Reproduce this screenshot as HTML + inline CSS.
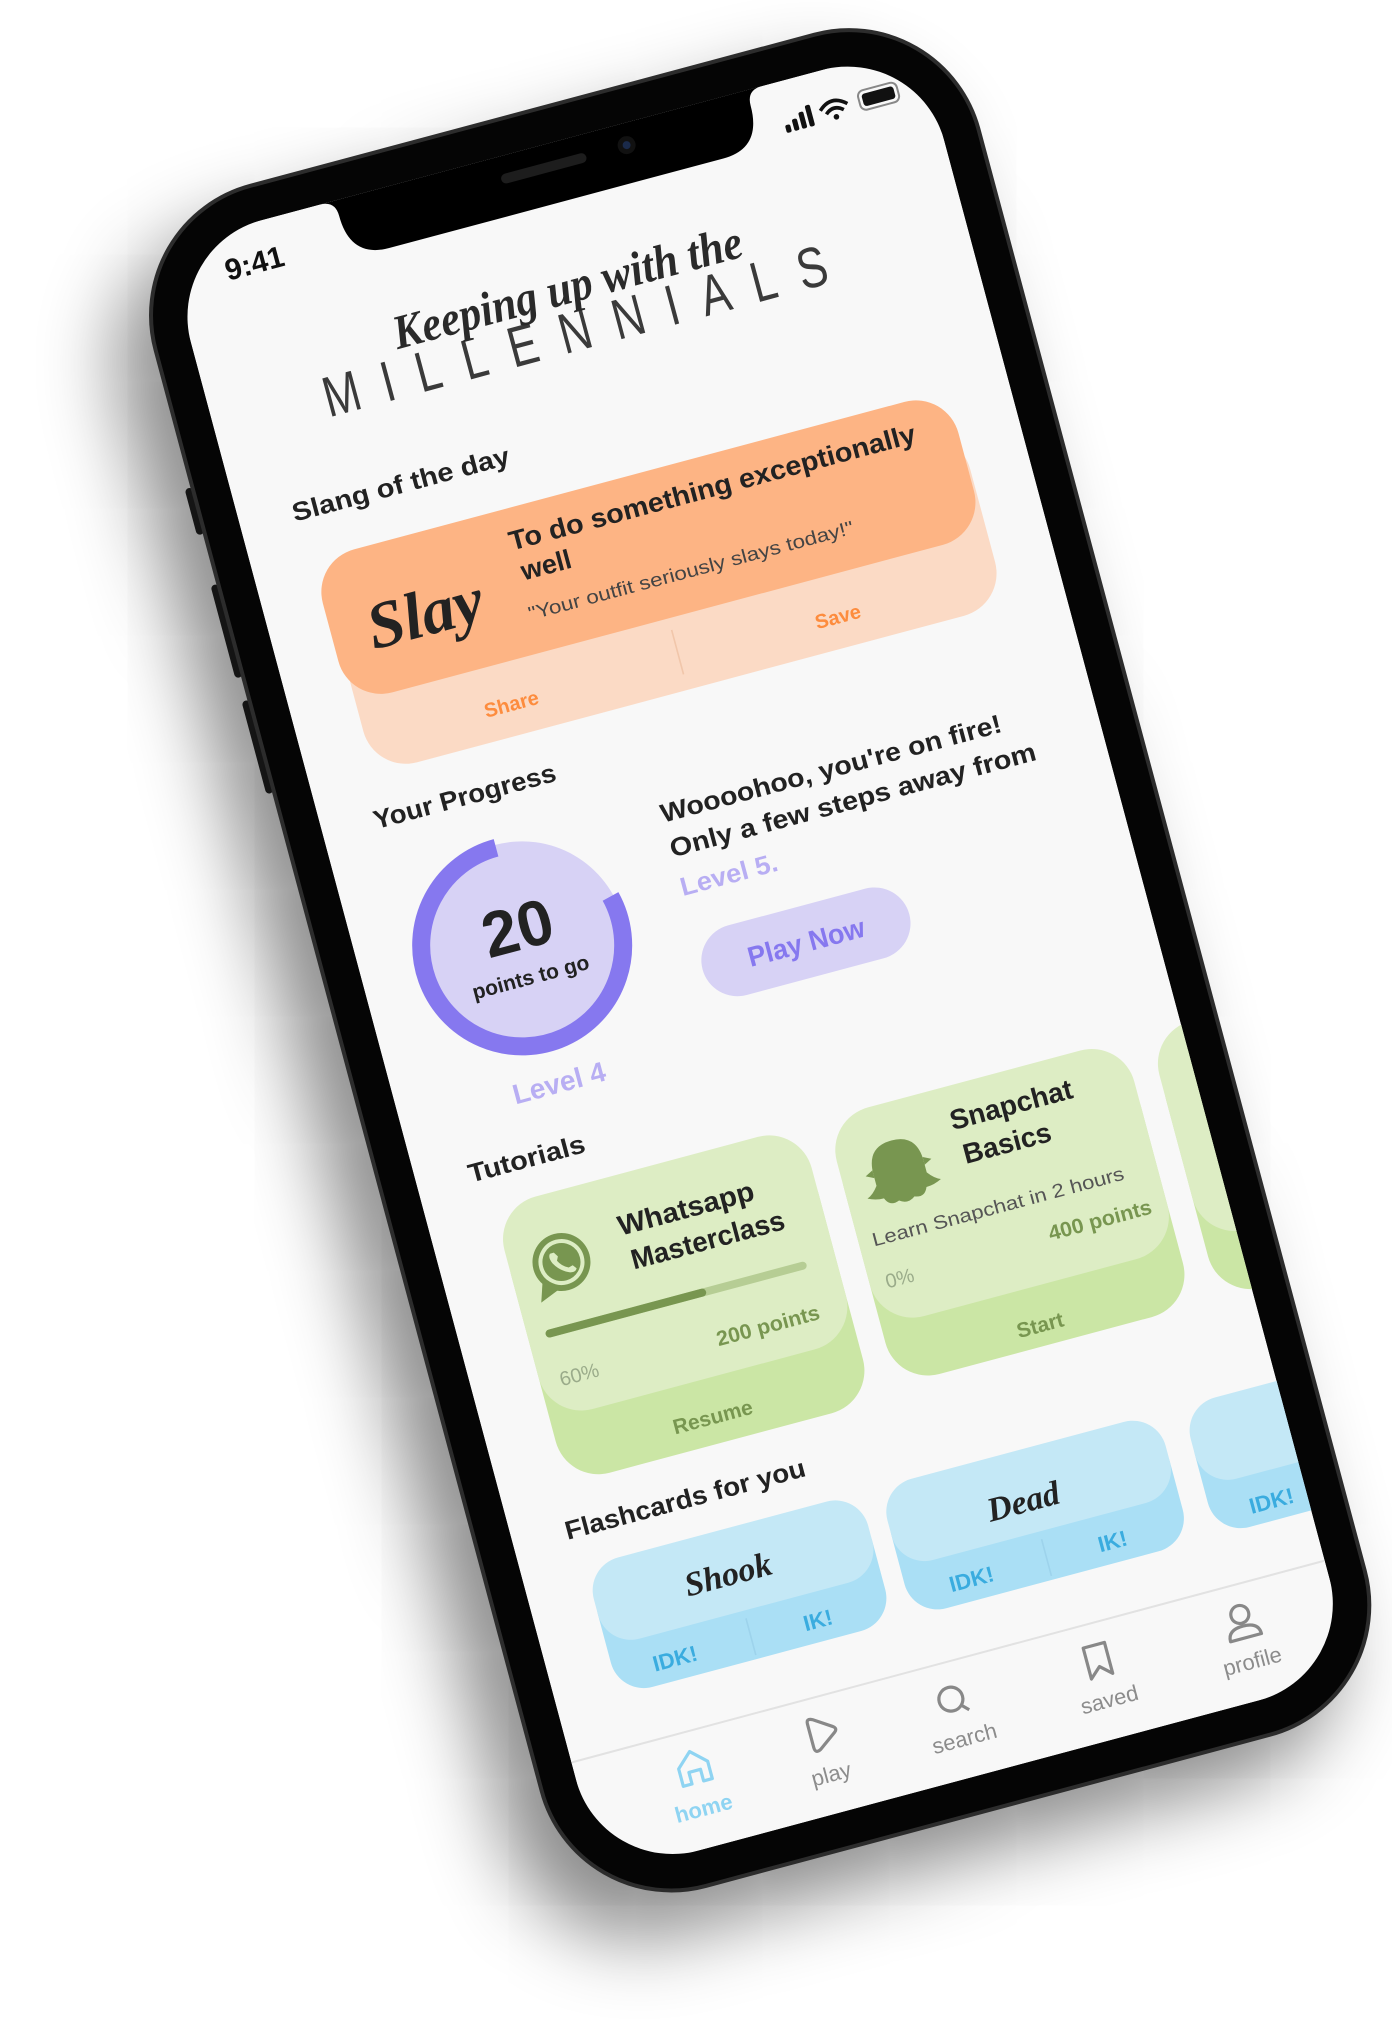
<!DOCTYPE html>
<html><head><meta charset="utf-8"><style>
html,body{margin:0;padding:0;background:#fff;width:1392px;height:2036px;overflow:hidden}
#ph{position:absolute;left:0;top:0;width:390px;height:844px;transform-origin:0 0;transform:translate(165px,246px) rotate(-15deg) scale(2)}
#frame{position:absolute;left:-19px;top:-19px;width:428px;height:882px;border-radius:68px;background:#050505;box-sizing:border-box;border:2.5px solid #2c2c2c;box-shadow:-22px 18px 38px rgba(0,0,0,.45)}
.btn{position:absolute;left:-22px;width:4px;background:#222;border-radius:2px}
svg{position:absolute;left:0;top:0}
text{font-family:"Liberation Sans",sans-serif}
.b{font-weight:bold}
.s{font-family:"Liberation Serif",serif;font-style:italic;font-weight:bold}
</style></head><body>
<div id="ph">
<div class="btn" style="top:120px;height:24px"></div>
<div class="btn" style="top:170px;height:48px"></div>
<div class="btn" style="top:230px;height:48px"></div>
<div id="frame"></div>
<svg width="390" height="844" viewBox="0 0 390 844">
<defs><clipPath id="c"><rect x="0" y="0" width="390" height="844" rx="50"/></clipPath></defs>
<g clip-path="url(#c)">
<rect width="390" height="844" fill="#f8f8f8"/>
<!-- notch -->
<path d="M80 0 Q88 0 88 8 Q88 30 108 30 L281 30 Q301 30 301 8 Q301 0 309 0 Z" fill="#000"/>
<rect x="171" y="9" width="44" height="5" rx="2.5" fill="#1d1d1d"/>
<circle cx="236" cy="11" r="4.5" fill="#111"/><circle cx="236" cy="11" r="2" fill="#1a2a4a"/>
<!-- status -->
<text x="26" y="25" font-size="15" class="b" fill="#111">9:41</text>
<g fill="#111"><rect x="315" y="22" width="2.6" height="4" rx="1"/><rect x="319" y="20" width="2.6" height="6" rx="1"/><rect x="323" y="17.5" width="2.6" height="8.5" rx="1"/><rect x="327" y="15" width="2.6" height="11" rx="1"/></g>
<path d="M334 19.5 Q341 13 348 19.5 M336.5 22 Q341 18 345.5 22" stroke="#111" stroke-width="1.8" fill="none"/><circle cx="341" cy="24.5" r="1.4" fill="#111"/>
<rect x="354" y="15" width="20" height="10" rx="3" fill="none" stroke="#888" stroke-width="1"/><rect x="355.8" y="16.8" width="16.4" height="6.4" rx="1.6" fill="#111"/>
<!-- title -->
<text x="57" y="0" font-size="22" fill="#3a3a3a" textLength="260" lengthAdjust="spacing" transform="translate(0,104) scale(1,1.3)">MILLENNIALS</text>
<text x="99" y="80" font-size="24" class="s" fill="#2a2a2a" textLength="180" lengthAdjust="spacingAndGlyphs">Keeping up with the</text>
<!-- slang -->
<text x="27" y="150" font-size="13" class="b" fill="#222" textLength="112" lengthAdjust="spacingAndGlyphs">Slang of the day</text>
<rect x="33" y="190" width="327" height="92" rx="22" fill="#fbdac5"/>
<rect x="30" y="171" width="329" height="74" rx="22" fill="#fdb484"/>
<text x="78" y="222" font-size="33" class="s" fill="#222" text-anchor="middle">Slay</text>
<text x="128" y="192" font-size="13.5" class="b" fill="#222" textLength="210" lengthAdjust="spacingAndGlyphs">To do something exceptionally</text>
<text x="130" y="208" font-size="13.5" class="b" fill="#222">well</text>
<text x="128" y="228" font-size="9.5" fill="#444" textLength="168" lengthAdjust="spacingAndGlyphs">"Your outfit seriously slays today!"</text>
<line x1="195" y1="251" x2="195" y2="274" stroke="#f1c6aa" stroke-width="0.8"/>
<text x="108" y="269.5" font-size="10" class="b" fill="#fd8c3e" text-anchor="middle">Share</text>
<text x="277" y="269.5" font-size="10" class="b" fill="#fd8c3e" text-anchor="middle">Save</text>
<!-- progress -->
<text x="26.5" y="309" font-size="13" class="b" fill="#222" textLength="94" lengthAdjust="spacingAndGlyphs">Your Progress</text>
<circle cx="82" cy="384" r="52" fill="#d7d2f5"/>
<path d="M131 371.8 A50.5 50.5 0 1 1 82 333.5" stroke="#8678ef" stroke-width="9" fill="none"/>
<text x="82" y="386" font-size="32" class="b" fill="#222" text-anchor="middle">20</text>
<text x="82" y="404" font-size="10.5" class="b" fill="#222" text-anchor="middle">points to go</text>
<text x="82" y="460" font-size="14" class="b" fill="#b8aef3" text-anchor="middle">Level 4</text>
<text x="166" y="343" font-size="13" class="b" fill="#222" textLength="176" lengthAdjust="spacingAndGlyphs">Woooohoo, you're on fire!</text>
<text x="166" y="361" font-size="13" class="b" fill="#222" textLength="189" lengthAdjust="spacingAndGlyphs">Only a few steps away from</text>
<text x="166" y="381" font-size="13" class="b" fill="#b8aef3" textLength="50" lengthAdjust="spacingAndGlyphs">Level 5.</text>
<rect x="166" y="401" width="107" height="36" rx="18" fill="#d7d2f5"/>
<text x="219.5" y="424" font-size="14" class="b" fill="#8678ef" text-anchor="middle" textLength="60" lengthAdjust="spacingAndGlyphs">Play Now</text>
<!-- tutorials -->
<text x="26.5" y="492" font-size="13" class="b" fill="#222" textLength="60" lengthAdjust="spacingAndGlyphs">Tutorials</text>
<rect x="34" y="520" width="159" height="130" rx="22" fill="#cbe6a5"/>
<rect x="34" y="507" width="159" height="110" rx="22" fill="#ddedc4"/>
<rect x="206" y="520" width="154" height="125" rx="22" fill="#cbe6a5"/>
<rect x="206" y="507" width="154" height="108" rx="22" fill="#ddedc4"/>
<rect x="373" y="520" width="154" height="125" rx="22" fill="#cbe6a5"/>
<rect x="373" y="507" width="154" height="108" rx="22" fill="#ddedc4"/>
<!-- whatsapp icon -->
<circle cx="60" cy="542" r="14.5" fill="#789650"/>
<path d="M48 550 L45 559 L55 555 Z" fill="#789650"/>
<circle cx="60" cy="542" r="10.5" fill="none" stroke="#ddedc4" stroke-width="2"/>
<path d="M55.5 536.5 Q54 538 55.5 541.5 Q58 546 62.5 548 Q65.5 549 66.5 547 L65 545 L62.8 545.6 Q59.5 544 58 540.8 L59 538.8 L57.5 536.5 Z" fill="#ddedc4"/>
<text x="92" y="537" font-size="14" class="b" fill="#222" textLength="70" lengthAdjust="spacingAndGlyphs">Whatsapp</text>
<text x="94" y="555" font-size="14" class="b" fill="#222" textLength="79" lengthAdjust="spacingAndGlyphs">Masterclass</text>
<line x1="45" y1="575" x2="176" y2="575" stroke="#b6cd94" stroke-width="4" stroke-linecap="round"/>
<line x1="45" y1="575" x2="124" y2="575" stroke="#789650" stroke-width="4" stroke-linecap="round"/>
<text x="178" y="603" font-size="10.5" class="b" fill="#789650" text-anchor="end" textLength="53" lengthAdjust="spacingAndGlyphs">200 points</text>
<text x="44" y="602" font-size="10" fill="#9aab8a">60%</text>
<text x="113" y="640" font-size="10.5" class="b" fill="#789650" text-anchor="middle">Resume</text>
<!-- ghost -->
<path d="M235 526 Q222 526 222 540 L222 546 Q219 550 216 551 Q220 553 224 553 Q226 558 231 556 Q235 559 239 556 Q244 558 246 553 Q250 553 254 551 Q251 550 248 546 L248 540 Q248 526 235 526 Z" fill="#789650"/>
<path d="M222 538 L218 540 L222 542 Z M248 538 L252 540 L248 542 Z" fill="#789650"/>
<text x="266" y="529" font-size="14" class="b" fill="#222">Snapchat</text>
<text x="268" y="547" font-size="14" class="b" fill="#222">Basics</text>
<text x="213" y="575" font-size="9.5" fill="#555" textLength="130" lengthAdjust="spacingAndGlyphs">Learn Snapchat in 2 hours</text>
<text x="352" y="595" font-size="10.5" class="b" fill="#789650" text-anchor="end" textLength="53" lengthAdjust="spacingAndGlyphs">400 points</text>
<text x="214" y="597" font-size="10" fill="#9aab8a">0%</text>
<text x="283" y="638" font-size="10.5" class="b" fill="#789650" text-anchor="middle">Start</text>
<!-- flashcards -->
<text x="27" y="677" font-size="13" class="b" fill="#222" textLength="124" lengthAdjust="spacingAndGlyphs">Flashcards for you</text>
<g>
<rect x="32" y="700" width="142" height="59" rx="17" fill="#aadff5"/>
<rect x="32" y="692" width="142" height="42" rx="17" fill="#c4e8f6"/>
<rect x="184" y="700" width="144" height="59" rx="17" fill="#aadff5"/>
<rect x="184" y="692" width="144" height="42" rx="17" fill="#c4e8f6"/>
<rect x="341" y="700" width="144" height="59" rx="17" fill="#aadff5"/>
<rect x="341" y="692" width="144" height="42" rx="17" fill="#c4e8f6"/>
<line x1="103" y1="738" x2="103" y2="757" stroke="#9dd3ec" stroke-width="0.8"/>
<line x1="256" y1="738" x2="256" y2="757" stroke="#9dd3ec" stroke-width="0.8"/>
<text x="100" y="720" font-size="17" class="s" fill="#222" text-anchor="middle">Shook</text>
<text x="252" y="723" font-size="17" class="s" fill="#222" text-anchor="middle">Dead</text>
<g font-size="11" class="b" fill="#3aacdf" text-anchor="middle">
<text x="63.5" y="752" class="b">IDK!</text><text x="137.5" y="752" class="b">IK!</text>
<text x="217" y="752" class="b">IDK!</text><text x="290" y="752" class="b">IK!</text>
<text x="372" y="753" class="b">IDK!</text></g>
</g>
<!-- tab bar -->
<line x1="0" y1="785" x2="390" y2="785" stroke="#e2e2e2" stroke-width="1"/>
<path d="M51 811 L51 802 L58.5 795 L66 802 L66 811 L61.5 811 L61.5 805 L55.5 805 L55.5 811 Z" fill="none" stroke="#8fd4f2" stroke-width="1.6" stroke-linejoin="round"/>
<path d="M119 797 Q119 794 122 795.5 L131 801.5 Q133 803 131 804.5 L122 811 Q119 812.5 119 809 Z" fill="none" stroke="#888" stroke-width="1.6" stroke-linejoin="round"/>
<circle cx="191.5" cy="803.5" r="6" fill="none" stroke="#888" stroke-width="1.6"/><line x1="196" y1="808" x2="199" y2="811" stroke="#888" stroke-width="1.6"/>
<path d="M262 796 L273 796 L273 812 L267.5 807 L262 812 Z" fill="none" stroke="#888" stroke-width="1.6" stroke-linejoin="round"/>
<circle cx="342" cy="800" r="4.5" fill="none" stroke="#888" stroke-width="1.6"/><path d="M334 812 Q334 806 342 806 Q350 806 350 812 Z" fill="none" stroke="#888" stroke-width="1.6" stroke-linejoin="round"/>
<text x="58" y="828" font-size="11" class="b" fill="#8fd4f2" text-anchor="middle">home</text>
<g font-size="11" fill="#8c8c8c" text-anchor="middle"><text x="124" y="828">play</text><text x="193" y="828">search</text><text x="268" y="828">saved</text><text x="342" y="828">profile</text></g>
</g>
</svg>
</div>
</body></html>
